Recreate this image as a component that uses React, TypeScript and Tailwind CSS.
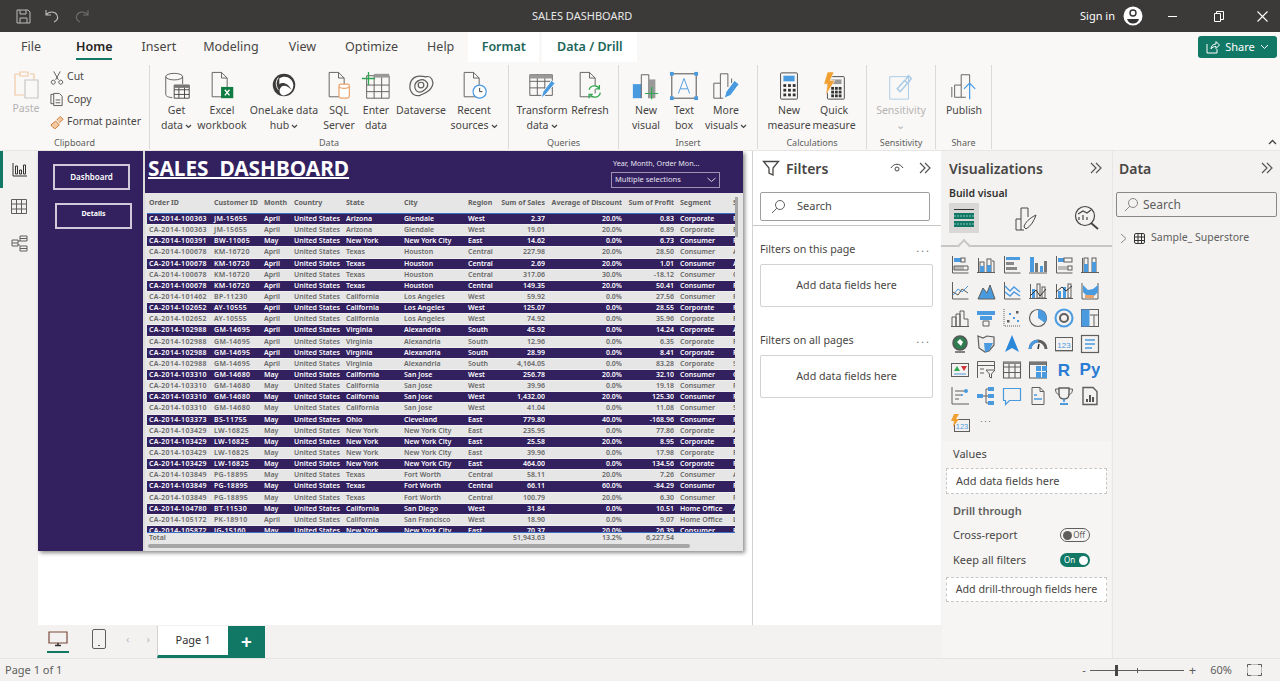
import React from 'react';

const G = '#605e5c';
const B = '#4a9ae0';
const O = '#e9a36b';

const Ico = ({ s = 30, vb = 32, children }: { s?: number; vb?: number; children: React.ReactNode }) => (
  <svg width={s} height={s} viewBox={`0 0 ${vb} ${vb}`} fill="none" stroke={G} strokeWidth={1} className="shrink-0">
    {children}
  </svg>
);

const Caret = () => (
  <svg width="7" height="5" viewBox="0 0 7 5" fill="none" stroke="#444" strokeWidth={1.2} className="inline ml-[2px]">
    <path d="M1 1l2.5 2.5L6 1" />
  </svg>
);

const DoubleChevron = () => (
  <svg width="14" height="12" viewBox="0 0 14 12" fill="none" stroke="#555" strokeWidth={1.2}>
    <path d="M2 1l5 5-5 5M7 1l5 5-5 5" />
  </svg>
);

const Doc = () => <path d="M5.5 1.5h10l6 6v20h-16zM15.5 1.5v6h6" />;

// ---- ribbon icons ----
const ribbonIcons: Record<string, React.ReactNode> = {
  getData: (
    <>
      <ellipse cx="13" cy="6" rx="9" ry="3.5" />
      <path d="M4 6v19c0 2 3 3 7 3.5M22 6v8" />
      <path d="M13 15h16v14H13zM13 20h16M13 25h16M18 15v14M24 15v14" stroke="#444" />
      <path d="M13 15h16v3H13z" fill="#777" stroke="none" />
    </>
  ),
  excel: (
    <>
      <Doc />
      <rect x="15" y="17" width="13" height="12" fill="#107c41" stroke="none" />
      <path d="M19 20l5 6M24 20l-5 6" stroke="#fff" strokeWidth={1.4} />
    </>
  ),
  onelake: (
    <>
      <circle cx="16" cy="15" r="12" fill="#3b3a39" stroke="none" />
      <path d="M11 8c6-4 14-1 15 7 0 7-6 11-11 11-4-1-5-6-2-9 3-3 8 0 11 3-3-6-9-9-13-6z" fill="#fff" stroke="none" />
      <path d="M10 7c-3 4-3 9 0 13" stroke="#fff" />
    </>
  ),
  sql: (
    <>
      <Doc />
      <rect x="16" y="14" width="11" height="15" rx="2" fill="#fff" stroke={O} strokeWidth={1.3} />
      <path d="M16 17c2 2 9 2 11 0" stroke={O} strokeWidth={1.3} />
    </>
  ),
  enter: (
    <>
      <path d="M6 5h24v24H6zM6 15h24M6 22h24M14 5v24M22 5v24" />
      <path d="M14 3h16v4H14z" fill="#999" stroke="none" />
      <path d="M8 1v14M1 8h14" stroke="#2fa84f" strokeWidth={1.4} />
    </>
  ),
  dataverse: (
    <>
      <path d="M8 25C2 20 3 9 11 6c5-2 8 1 11 0 5-1 8 5 6 10-3 7-9 8-13 10-3 1-5 0-7-1z" strokeWidth={1.3} />
      <path d="M11 21c-3-4-2-9 3-11 4-2 7 0 9 3 1 4-2 7-6 9-3 1-5 0-6-1z" strokeWidth={1.3} />
      <circle cx="16" cy="15" r="3" strokeWidth={1.3} />
    </>
  ),
  recent: (
    <>
      <Doc />
      <circle cx="22" cy="22" r="7" fill="#fff" stroke={B} strokeWidth={1.3} />
      <path d="M22 18v4h3" stroke="#333" />
    </>
  ),
  transform: (
    <>
      <path d="M3 4h24v22H3zM3 11h24M3 18h24M11 4v22M19 4v22" />
      <path d="M3 4h24v4H3z" fill="#999" stroke="none" />
      <path d="M15 29l2-7L26 10l4 3-10 12z" fill={B} stroke="#fff" />
    </>
  ),
  refresh: (
    <>
      <Doc />
      <path d="M15 20a6 6 0 0 1 11-1M27 23a6 6 0 0 1-11 2" stroke="#2fa84f" strokeWidth={1.4} fill="#fff" />
      <path d="M26 15v4h-4M15 29v-4h4" stroke="#2fa84f" strokeWidth={1.4} />
    </>
  ),
  newVisual: (
    <>
      <rect x="2" y="14" width="9" height="15" fill={B} stroke="none" />
      <path d="M11 29V4h8v25" />
      <rect x="19" y="9" width="7" height="20" fill="#999" stroke="none" />
      <path d="M22 17v13M15 24h14" stroke="#2fa84f" strokeWidth={1.3} />
    </>
  ),
  textBox: (
    <>
      <path d="M3 3h26v26H3z" stroke="#444" />
      <g fill={B} stroke="none">
        <rect x="1" y="1" width="4" height="4" />
        <rect x="27" y="1" width="4" height="4" />
        <rect x="1" y="27" width="4" height="4" />
        <rect x="27" y="27" width="4" height="4" />
      </g>
      <path d="M10 24l6-16 6 16M12 19h8" stroke={B} />
    </>
  ),
  moreVisuals: (
    <>
      <path d="M3 29V13h7M10 29V3h8v14M3 29h10M22 8v5" />
      <path d="M14 29l2-7 9-12 5 4-9 12z" fill={B} stroke="#fff" />
    </>
  ),
  newMeasure: (
    <>
      <rect x="7" y="2" width="18" height="28" rx="1" stroke="#444" />
      <rect x="10" y="5" width="12" height="6" fill={B} stroke="none" />
      <g fill="#333" stroke="none">
        {[14, 19, 24].map((y) => [10, 15, 20].map((x) => <rect key={`${x}-${y}`} x={x} y={y} width="3" height="3" />))}
      </g>
    </>
  ),
  quick: (
    <>
      <rect x="9" y="6" width="18" height="24" rx="1" stroke="#444" />
      <rect x="13" y="9" width="11" height="5" fill="#999" stroke="none" />
      <g fill="#333" stroke="none">
        {[17, 21, 25].map((y) => [13, 17, 21].map((x) => <rect key={`${x}-${y}`} x={x} y={y} width="3" height="3" />))}
      </g>
      <path d="M9 1h7l-4 9h5L7 26l2-12H5z" fill="#f0a030" stroke="#fff" strokeWidth={0.6} />
    </>
  ),
  sensitivity: (
    <g stroke="#a9cbe6">
      <path d="M4 6h20v24H4z" />
      <path d="M12 19l8-9 3 3-8 9zM21 9l3-4 3 3-3 4" strokeWidth={1.6} />
    </g>
  ),
  publish: (
    <>
      <path d="M6 28V15h7M13 28V4h9v12M6 28h12M3 28V17" />
      <path d="M22 30V13M16 19l6-6 6 6" stroke={B} strokeWidth={1.3} />
    </>
  ),
};

type BtnProps = { w: number; icon: string; lines: string[]; caret?: boolean; off?: boolean };
const RibbonBtn = ({ w, icon, lines, caret, off }: BtnProps) => (
  <div style={{ width: w }} className={`flex flex-col items-center shrink-0 ${off ? 'text-[#b5b3b1]' : 'text-[#484644]'}`}>
    <div className="h-[32px] flex items-center justify-center">
      <Ico>{ribbonIcons[icon]}</Ico>
    </div>
    <div className="mt-[1px] text-center text-[10.5px] leading-[15px] whitespace-nowrap">
      {lines.map((l, i) => (
        <div key={l}>
          {l}
          {caret && i === lines.length - 1 && <Caret />}
        </div>
      ))}
    </div>
  </div>
);

const Group = ({ w, label, pl = 0, children }: { w: number; label: string; pl?: number; children: React.ReactNode }) => (
  <div style={{ width: w }} className="shrink-0 flex flex-col border-r border-[#dcdad8] mt-[3px] h-[84px]">
    <div style={{ paddingLeft: pl }} className="flex h-[73px] pt-[5px]">
      {children}
    </div>
    <div className="text-center text-[9px] leading-[12px] text-[#605e5c]">{label}</div>
  </div>
);

const tabs = [
  ['File', 'ml-[21px]'],
  ['Home', 'ml-[35px]'],
  ['Insert', 'ml-[29px]'],
  ['Modeling', 'ml-[27px]'],
  ['View', 'ml-[30px]'],
  ['Optimize', 'ml-[29px]'],
  ['Help', 'ml-[29px]'],
];

// ---- table ----
const cols = 'grid grid-cols-[65px_50px_30px_52px_58px_64px_29px_50px_77px_52px_57px_4px] items-center';

const base = [
  ['100363', 'JM-15655', 'April', 'Arizona', 'Glendale', 'West'],
  ['100391', 'BW-11065', 'May', 'New York', 'New York City', 'East'],
  ['100678', 'KM-16720', 'April', 'Texas', 'Houston', 'Central'],
  ['101462', 'BP-11230', 'April', 'California', 'Los Angeles', 'West'],
  ['102652', 'AY-10555', 'April', 'California', 'Los Angeles', 'West'],
  ['102988', 'GM-14695', 'April', 'Virginia', 'Alexandria', 'South'],
  ['103310', 'GM-14680', 'May', 'California', 'San Jose', 'West'],
  ['103373', 'BS-11755', 'May', 'Ohio', 'Cleveland', 'East'],
  ['103429', 'LW-16825', 'May', 'New York', 'New York City', 'East'],
  ['103849', 'PG-18895', 'May', 'Texas', 'Fort Worth', 'Central'],
  ['104780', 'BT-11530', 'May', 'California', 'San Diego', 'West'],
  ['105172', 'PK-18910', 'April', 'California', 'San Francisco', 'West'],
  ['105872', 'JG-15160', 'May', 'New York', 'New York City', 'East'],
];

const rows: [number, string, string, string, string, string][] = [
  [0, '2.37', '20.0%', '0.83', 'Corporate', 'F'],
  [0, '19.01', '20.0%', '6.89', 'Corporate', 'F'],
  [1, '14.62', '0.0%', '6.73', 'Consumer', 'F'],
  [2, '227.98', '20.0%', '28.50', 'Consumer', 'A'],
  [2, '2.69', '20.0%', '1.01', 'Consumer', 'A'],
  [2, '317.06', '30.0%', '-18.12', 'Consumer', 'O'],
  [2, '149.35', '20.0%', '50.41', 'Consumer', 'F'],
  [3, '59.92', '0.0%', '27.56', 'Consumer', 'F'],
  [4, '125.07', '0.0%', '28.55', 'Corporate', 'F'],
  [4, '74.92', '0.0%', '35.96', 'Corporate', 'F'],
  [5, '45.92', '0.0%', '14.24', 'Corporate', 'A'],
  [5, '12.96', '0.0%', '6.35', 'Corporate', 'F'],
  [5, '28.99', '0.0%', '8.41', 'Corporate', 'F'],
  [5, '4,164.05', '0.0%', '83.28', 'Corporate', 'S'],
  [6, '256.78', '20.0%', '32.10', 'Consumer', 'O'],
  [6, '39.96', '0.0%', '19.18', 'Consumer', 'F'],
  [6, '1,432.00', '20.0%', '125.30', 'Consumer', 'F'],
  [6, '41.04', '0.0%', '11.08', 'Consumer', 'S'],
  [7, '779.80', '40.0%', '-168.96', 'Consumer', 'F'],
  [8, '235.95', '0.0%', '77.86', 'Corporate', 'A'],
  [8, '25.58', '20.0%', '8.95', 'Corporate', 'E'],
  [8, '39.96', '0.0%', '17.98', 'Corporate', 'F'],
  [8, '464.00', '0.0%', '134.56', 'Corporate', 'F'],
  [9, '58.11', '20.0%', '7.26', 'Consumer', 'A'],
  [9, '66.11', '60.0%', '-84.29', 'Consumer', 'F'],
  [9, '100.79', '20.0%', '6.30', 'Consumer', 'F'],
  [10, '31.84', '0.0%', '10.51', 'Home Office', 'A'],
  [11, '18.90', '0.0%', '9.07', 'Home Office', 'L'],
  [12, '70.37', '20.0%', '26.39', 'Consumer', 'F'],
];

const Cell = ({ r, t, children }: { r?: boolean; t?: boolean; children?: React.ReactNode }) => (
  <div className={`overflow-hidden whitespace-nowrap ${r ? 'text-right' : 'pl-[2px]'} ${t ? 'tracking-[0.3px]' : ''}`}>{children}</div>
);

const Table = () => (
  <div className="flex-1 min-h-0 bg-[#e6e6e6] flex relative">
    <div className="w-[588px] flex flex-col ml-[2px]">
      <div className={`${cols} h-[20px] text-[7px] font-bold text-[#5f5f5f]`}>
        {['Order ID', 'Customer ID', 'Month', 'Country', 'State', 'City', 'Region'].map((h) => (
          <Cell key={h}>{h}</Cell>
        ))}
        <Cell r>Sum of Sales</Cell>
        <Cell r>Average of Discount</Cell>
        <Cell r>Sum of Profit</Cell>
        <div className="pl-[6px]">Segment</div>
        <Cell>S</Cell>
      </div>
      <div className="h-[319px] overflow-hidden border-t border-[#3b6fc4]">
        {rows.map((r, i) => {
          const b = base[r[0]];
          const dark = i % 2 === 0;
          return (
            <div
              key={i}
              className={`${cols} h-[11.15px] text-[7px] font-semibold border-b border-[#f0f0f0] ${
                dark ? 'bg-[#33215f] text-white font-bold' : 'bg-[#e6e6e6] text-[#666]'
              }`}
            >
              <Cell t>CA-2014-{b[0]}</Cell>
              <Cell t>{b[1]}</Cell>
              <Cell>{b[2]}</Cell>
              <Cell>United States</Cell>
              <Cell>{b[3]}</Cell>
              <Cell>{b[4]}</Cell>
              <Cell>{b[5]}</Cell>
              <Cell r>{r[1]}</Cell>
              <Cell r>{r[2]}</Cell>
              <Cell r>{r[3]}</Cell>
              <div className="pl-[6px] whitespace-nowrap">{r[4]}</div>
              <Cell>{r[5]}</Cell>
            </div>
          );
        })}
      </div>
      <div className={`${cols} h-[12px] text-[7px] font-semibold text-[#666] border-t border-[#3b6fc4]`}>
        <Cell>Total</Cell>
        <Cell />
        <Cell />
        <Cell />
        <Cell />
        <Cell />
        <Cell />
        <Cell r>51,943.63</Cell>
        <Cell r>13.2%</Cell>
        <Cell r>6,227.54</Cell>
      </div>
      <div className="h-[4px] w-[542px] bg-[#a6a6a6] rounded-sm ml-[1px]" />
    </div>
    <div className="absolute left-[590px] top-[4px] w-[3px] h-[40px] bg-[#a6a6a6]" />
  </div>
);

// ---- visualization gallery ----
const bars = (rects: [number, number, number, number, string][]) =>
  rects.map(([x, y, w, h, c]) => <rect key={`${x}-${y}-${c}`} x={x} y={y} width={w} height={h} fill={c === 'b' ? B : c === 'g' ? '#bbb' : 'none'} stroke={c === 'n' ? G : 'none'} />);
const axisL = <path d="M2.5 1v17h16" />;
const axisB = <path d="M1 17.5h18M2.5 17V3" />;

const viz: React.ReactNode[] = [
  <>{axisL}{bars([[4, 3, 7, 4, 'b'], [11, 3, 4, 4, 'n'], [4, 11, 10, 4, 'g']])}<path d="M4 11h14v4H4z" /></>,
  <>{axisB}{bars([[4, 7, 4, 10, 'n'], [4, 11, 4, 6, 'b'], [11, 4, 4, 13, 'n'], [11, 10, 4, 7, 'b']])}<path d="M16 6h2v11" /></>,
  <>{axisL}<rect x="4" y="2" width="14" height="3" fill={B} stroke="none" /><rect x="4" y="7" width="8" height="3" fill="#888" stroke="none" /><rect x="4" y="12" width="11" height="3" fill="#888" stroke="none" /></>,
  <><path d="M1 18h18" /><rect x="2" y="2" width="4" height="15" fill={B} stroke="none" /><rect x="7" y="8" width="3" height="9" fill="#777" stroke="none" /><rect x="12" y="11" width="3" height="6" fill={B} stroke="none" /><rect x="16" y="6" width="3" height="11" fill="#777" stroke="none" /></>,
  <>{axisL}{bars([[4, 3, 6, 4, 'b'], [10, 3, 8, 4, 'n'], [4, 11, 10, 4, 'g'], [14, 11, 4, 4, 'n']])}</>,
  <>{axisB}{bars([[4, 3, 4, 14, 'n'], [4, 9, 4, 8, 'b'], [12, 3, 4, 14, 'n'], [12, 7, 4, 10, 'b']])}</>,

  <>{axisL}<path d="M3 14l5-6 4 3 6-6" stroke={B} /><path d="M3 11l5 3 4-6 6 4" /></>,
  <><path d="M2 18L7 7l4 5 3-8 5 14z" fill={B} stroke={G} /></>,
  <>{axisL}<path d="M3 5l5 5 4-4 6 5" stroke={B} strokeWidth={1.4} /><path d="M3 11l5 4 4-4 6 4" stroke={B} strokeWidth={1.4} /></>,
  <>{axisB}{bars([[4, 8, 3, 9, 'b'], [9, 3, 3, 14, 'n'], [14, 6, 3, 11, 'n']])}<path d="M2 15l6-6 4 6 6-7" stroke="#333" /></>,
  <>{axisB}{bars([[4, 10, 3, 7, 'b'], [9, 6, 3, 11, 'b'], [14, 3, 3, 14, 'n']])}<path d="M2 11l6-5 4 4 6-5" stroke="#333" /></>,
  <><path d="M2 2v16h16V2" /><path d="M3 4l5 5 5-1 5-4v7l-5 5H8L3 11z" fill={B} stroke="none" /><path d="M5 14h9v3H5z" fill={O} stroke="none" /></>,

  <><path d="M1 18.5h18M2 18V9h4v9M6 18V6h4v12M10 18V3h4v8h4v7" /></>,
  <><path d="M1 3h18v4H1z" fill={B} stroke="none" /><path d="M4 8h12v4H4z" fill={B} stroke="none" /><path d="M7 13h6v5H7z" stroke={G} /></>,
  <><path d="M2 1v17h17" strokeDasharray="1 1" /><g fill={G} stroke="none"><rect x="5" y="12" width="2.5" height="2.5" /><rect x="14" y="3" width="2.5" height="2.5" /></g><g fill={B} stroke="none"><rect x="7" y="5" width="2" height="2" /><rect x="11" y="9" width="2" height="2" /><rect x="15" y="12" width="2" height="2" /></g></>,
  <><circle cx="10" cy="10" r="8.5" strokeWidth={1.2} /><path d="M10 10V1.5A8.5 8.5 0 0 1 17 15z" fill={B} stroke="none" /></>,
  <><circle cx="10" cy="10" r="8.5" stroke={B} strokeWidth={2} /><circle cx="10" cy="10" r="4" stroke={G} strokeWidth={2} /></>,
  <><rect x="1.5" y="1.5" width="17" height="17" /><rect x="1.5" y="1.5" width="8" height="17" fill={B} stroke="none" /><path d="M10 7h9M14 7v12" /></>,

  <><circle cx="10" cy="9" r="7" fill="#2f7d4f" stroke="#555" strokeWidth={1.5} /><path d="M7 8l3-3 3 3-2 4z" fill="#fff" stroke="none" /><path d="M5 18h10" strokeWidth={1.5} /></>,
  <><path d="M2 2l5 2 4-2 7 1v8l-5 6-4 1-6-4z" fill="#eee" stroke={G} strokeWidth={1.2} /><path d="M8 9h9l-4 8-4 1z" fill={B} stroke="none" /></>,
  <><path d="M10 1L3 18l7-4 7 4z" fill="#2b88d8" stroke="none" /></>,
  <><path d="M2 15a8 8 0 0 1 16 0" stroke={G} strokeWidth={3} /><path d="M2 15a8 8 0 0 1 8-8" stroke={B} strokeWidth={3} /><path d="M10 15l1-5" stroke="#333" strokeWidth={1.5} /></>,
  <><rect x="1.5" y="3.5" width="17" height="13" /><text x="10" y="13.5" fontSize="8" textAnchor="middle" fill={B} stroke="none" fontFamily="Liberation Sans">123</text><path d="M1 17.5h18" stroke="#bbb" /></>,
  <><rect x="1.5" y="1.5" width="17" height="17" strokeWidth={1.2} /><path d="M5 6h10M5 10h10M5 14h7" stroke={B} strokeWidth={1.4} /></>,

  <><rect x="1.5" y="3.5" width="17" height="13" /><path d="M4 11l3-5 3 5z" fill="#2fa84f" stroke="none" /><path d="M11 6h6l-3 5z" fill="#d13438" stroke="none" /><path d="M4 14h12" stroke={B} /></>,
  <><path d="M1.5 18V1.5h17v8" /><path d="M1.5 5.5h17M4 9h4M4 13h4" /><path d="M10 10h9l-3.5 4v4l-2-1v-3z" /></>,
  <><path d="M1.5 2h17v16h-17zM1.5 7h17M1.5 12.5h17M7 2v16M13 2v16" strokeWidth={1.1} /><path d="M1.5 2h17v2h-17z" fill="#888" stroke="none" /></>,
  <><rect x="1.5" y="2" width="17" height="16" stroke="#555" /><path d="M1.5 2h17v3h-17z" fill="#777" stroke="none" /><rect x="8" y="6" width="5" height="5" fill={B} stroke="none" /><rect x="14" y="6" width="5" height="5" fill={B} stroke="none" /><rect x="8" y="12" width="5" height="6" fill={B} stroke="none" /><rect x="14" y="12" width="5" height="6" fill={B} stroke="none" /></>,
  <text x="10" y="16" fontSize="17" fontWeight="bold" textAnchor="middle" fill="#2b7cd3" stroke="none" fontFamily="Liberation Sans">R</text>,
  <text x="10" y="15" fontSize="17" fontWeight="bold" textAnchor="middle" fill="#2b7cd3" stroke="none" fontFamily="Liberation Sans">Py</text>,

  <><path d="M2 1v17h17M5 5h10M5 9h7M5 13h4" /><circle cx="16" cy="5" r="2" fill={B} stroke="none" /><circle cx="12" cy="9" r="1" fill={B} stroke="none" /></>,
  <><rect x="1" y="8" width="6" height="4" fill={B} stroke="none" /><path d="M7 10h3M10 3v14M10 3h2M10 10h2M10 17h2" /><rect x="12" y="1" width="6" height="4" fill={B} stroke="none" /><rect x="12" y="8" width="6" height="4" fill={B} stroke="none" /><rect x="12" y="15" width="6" height="4" fill={B} stroke="none" /></>,
  <path d="M1.5 2.5h17v12h-11l-4 4v-4h-2z" stroke={B} strokeWidth={1.2} />,
  <><path d="M4 1.5h8l4 4v13H4zM12 1.5v4h4" /><path d="M6 9h3M6 13h8" stroke={B} strokeWidth={1.3} /></>,
  <><path d="M5 2h10v6c0 3-2 5-5 5s-5-2-5-5z" strokeWidth={1.4} /><path d="M5 3H1.5c0 3 1 5 4 6M15 3h3.5c0 3-1 5-4 6" /><path d="M10 13v3M6 18h8" stroke={B} strokeWidth={1.8} /></>,
  <><path d="M3 1.5h10l4 4v13H3z" strokeWidth={1.4} /><path d="M7 16v-3M10 16V9M13 16v-5" strokeWidth={1.8} stroke="#444" /></>,

  <><rect x="4.5" y="6.5" width="15" height="12" /><text x="12" y="16" fontSize="7.5" textAnchor="middle" fill={B} stroke="none" fontFamily="Liberation Sans">123</text><path d="M4 1h5L6 6h3l-6 8 1-6H1z" fill="#f0a030" stroke="none" /></>,
  <text x="10" y="11" fontSize="9" textAnchor="middle" fill="#605e5c" stroke="none" letterSpacing="1" fontFamily="Liberation Sans">···</text>,
];

const Toggle = ({ on }: { on?: boolean }) =>
  on ? (
    <div className="w-[30px] h-[14px] rounded-full bg-[#117865] flex items-center justify-between pl-[4px] pr-[2px] text-[8px] text-white leading-none">
      On
      <span className="w-[9px] h-[9px] rounded-full bg-white" />
    </div>
  ) : (
    <div className="w-[30px] h-[14px] rounded-full border border-[#605e5c] flex items-center justify-between pl-[2px] pr-[4px] text-[8px] text-[#605e5c] leading-none">
      <span className="w-[9px] h-[9px] rounded-full bg-[#605e5c]" />
      Off
    </div>
  );

const SearchIcon = ({ c = '#605e5c' }: { c?: string }) => (
  <svg width="15" height="15" viewBox="0 0 15 15" fill="none" stroke={c} strokeWidth={1}>
    <circle cx="9" cy="6" r="4.5" />
    <path d="M5.8 9.2L1 14" />
  </svg>
);

const FilterBox = () => (
  <div className="ml-[7px] mr-[8px] h-[43px] shrink-0 border border-[#d4d2d0] rounded-[2px] bg-white flex items-center justify-center text-[10.7px] text-[#484644]">
    Add data fields here
  </div>
);

const Dots = () => <span className="tracking-[2px] text-[#777] text-[11px] leading-none pb-[4px]">...</span>;

export default function App() {
  return (
    <div className="w-[1280px] h-[681px] flex flex-col overflow-hidden bg-white font-['Noto_Sans',sans-serif] text-[#323130]">
      {/* Title bar */}
      <div className="h-[32px] shrink-0 bg-[#3b3a39] flex items-center text-white">
        <div className="w-[532px] flex items-center gap-[14px] pl-[16px]">
          <svg width="15" height="15" viewBox="0 0 15 15" fill="none" stroke="#bdbbb9" strokeWidth={1}>
            <path d="M1 1h11l2 2v11H1zM4 1v4h6V1M4 14V9h7v5" />
          </svg>
          <svg width="15" height="14" viewBox="0 0 15 14" fill="none" stroke="#bdbbb9" strokeWidth={1.1}>
            <path d="M1 1v5h5M1 6c3-4 9-4 11 0s-1 6-3 7" />
          </svg>
          <svg width="15" height="14" viewBox="0 0 15 14" fill="none" stroke="#6f6e6d" strokeWidth={1.1}>
            <path d="M14 1v5H9M14 6c-3-4-9-4-11 0s1 6 3 7" />
          </svg>
        </div>
        <div className="w-[100px] text-[11px] text-center whitespace-nowrap text-[#e8e8e8]">SALES DASHBOARD</div>
        <div className="flex-1 flex items-center justify-end">
          <span className="text-[11px] mr-[8px]">Sign in</span>
          <svg width="20" height="20" viewBox="0 0 20 20" className="mr-[25px]">
            <circle cx="10" cy="10" r="9.5" fill="#fff" />
            <circle cx="10" cy="7" r="3" fill="none" stroke="#333" strokeWidth={1.4} />
            <path d="M4 13h12c-1 3-3 4.5-6 4.500S5 16 4 13z" fill="#333" />
          </svg>
          <div className="w-[9px] h-[1px] bg-white mr-[37px]" />
          <svg width="10" height="11" viewBox="0 0 10 11" fill="none" stroke="#fff" strokeWidth={1} className="mr-[33px]">
            <path d="M.5 2.5h6v8h-6zM2.5 2.5v-2h7v8h-3" />
          </svg>
          <svg width="11" height="11" viewBox="0 0 11 11" stroke="#fff" strokeWidth={1.1} className="mr-[12px]">
            <path d="M.5.5l10 10M10.5.5L.5 10.5" />
          </svg>
        </div>
      </div>

      {/* Tabs */}
      <div className="h-[30px] shrink-0 bg-[#f9f8f7] flex items-stretch text-[12.5px] text-[#484644] relative">
        {tabs.map(([t, ml]) => (
          <div key={t} className={`${ml} flex items-center relative ${t === 'Home' ? 'font-semibold text-[#252423]' : ''}`}>
            {t}
            {t === 'Home' && <div className="absolute left-0 right-0 bottom-[2px] h-[2px] bg-[#117865]" />}
          </div>
        ))}
        <div className="ml-[14px] w-[71px] bg-white flex items-center justify-center font-semibold text-[#1c6658]">Format</div>
        <div className="ml-[3px] w-[95px] bg-white flex items-center justify-center font-semibold text-[#1c6658]">Data / Drill</div>
        <div className="ml-auto mr-[3px] mt-[4px] w-[79px] h-[22px] rounded-[3px] bg-[#117865] flex items-center justify-center gap-[5px] text-white text-[11px]">
          <svg width="14" height="14" viewBox="0 0 14 14" fill="none" stroke="#fff" strokeWidth={1}>
            <path d="M1 4v9h10V9M5 9c0-3 2-5 5-5V1.5L13.5 5 10 8.500V6.500C8 6.500 6 7 5 9z" />
          </svg>
          Share
          <svg width="9" height="6" viewBox="0 0 9 6" fill="none" stroke="#fff" strokeWidth={1}>
            <path d="M1 1l3.5 3.500L8 1" />
          </svg>
        </div>
      </div>

      {/* Ribbon */}
      <div className="h-[89px] shrink-0 bg-[#f9f8f7] flex relative border-b border-[#e8e6e4]">
        <Group w={150} label="Clipboard">
          <div className="w-[50px] flex flex-col items-center text-[#b5b3b1] text-[10.5px] leading-[12px] pl-[2px]">
            <svg width="28" height="30" viewBox="0 0 28 30" fill="none" stroke="#f0c9a4" strokeWidth={1.2} className="-mt-[1px]">
              <path d="M3 5h5M18 5h4v6M3 5v21h9M8 3h8v4H8z" />
              <path d="M13 11h13v18H13z" stroke="#c8c6c4" />
            </svg>
            <div className="mt-[3px]">Paste</div>
          </div>
          <div className="flex flex-col text-[10.5px] text-[#484644] -mt-[4px]">
            {[
              ['Cut', <path key="c" d="M4 1l5 9M11 1L6 10M5 14a2 2 0 1 1-3-3 2 2 0 0 1 3 3zM13 14a2 2 0 1 1-3-3 2 2 0 0 1 3 3z" stroke="#555" />],
              ['Copy', <path key="p" d="M4 2H1v10h3M4 1h6l3 3v10H4zM6 8h5M6 11h5" stroke="#555" />],
              ['Format painter', <path key="f" d="M1 10l5-4 4 4-4 4c-2 0-4-2-5-4z M7 5l4-4 3 3-4 4" stroke="#c87533" fill="#f2c9a0" />],
            ].map(([l, p]) => (
              <div key={l as string} className="h-[22.5px] flex items-center gap-[3px]">
                <svg width="14" height="15" viewBox="0 0 15 15" fill="none">
                  {p}
                </svg>
                {l}
              </div>
            ))}
          </div>
        </Group>
        <Group w={359} label="Data" pl={6}>
          <RibbonBtn w={41} icon="getData" lines={['Get', 'data']} caret />
          <RibbonBtn w={50} icon="excel" lines={['Excel', 'workbook']} />
          <RibbonBtn w={74} icon="onelake" lines={['OneLake data', 'hub']} caret />
          <RibbonBtn w={36} icon="sql" lines={['SQL', 'Server']} />
          <RibbonBtn w={38} icon="enter" lines={['Enter', 'data']} />
          <RibbonBtn w={52} icon="dataverse" lines={['Dataverse']} />
          <RibbonBtn w={54} icon="recent" lines={['Recent', 'sources']} caret />
        </Group>
        <Group w={110} label="Queries" pl={7}>
          <RibbonBtn w={52} icon="transform" lines={['Transform', 'data']} caret />
          <RibbonBtn w={44} icon="refresh" lines={['Refresh']} />
        </Group>
        <Group w={139} label="Insert" pl={8}>
          <RibbonBtn w={38} icon="newVisual" lines={['New', 'visual']} />
          <RibbonBtn w={38} icon="textBox" lines={['Text', 'box']} />
          <RibbonBtn w={46} icon="moreVisuals" lines={['More', 'visuals']} caret />
        </Group>
        <Group w={109} label="Calculations" pl={7}>
          <RibbonBtn w={48} icon="newMeasure" lines={['New', 'measure']} />
          <RibbonBtn w={42} icon="quick" lines={['Quick', 'measure']} />
        </Group>
        <Group w={69} label="Sensitivity">
          <RibbonBtn w={68} icon="sensitivity" lines={['Sensitivity', '⌄']} off />
        </Group>
        <Group w={56} label="Share">
          <RibbonBtn w={56} icon="publish" lines={['Publish']} />
        </Group>
        <svg width="9" height="6" viewBox="0 0 9 6" fill="none" stroke="#444" strokeWidth={1.3} className="absolute right-[3px] top-[77px]">
          <path d="M1 5l3.500-3.500L8 5" />
        </svg>
      </div>

      {/* Middle */}
      <div className="flex-1 min-h-0 flex">
        <div className="w-[941px] flex flex-col">
          <div className="flex-1 min-h-0 flex">
            {/* Left rail */}
            <div className="w-[38px] shrink-0 bg-[#f3f2f1] flex flex-col">
              <div className="h-[37px] border-l-[3px] border-[#117865] flex items-center justify-center pr-[3px]">
                <svg width="15" height="14" viewBox="0 0 15 14" fill="none" stroke="#333" strokeWidth={1}>
                  <path d="M1 0v13h14M3.500 11V3h2v8zM7.500 11V7h2v4zM11.500 11V2h2v9z" />
                </svg>
              </div>
              <div className="h-[37px] flex items-center justify-center">
                <svg width="16" height="15" viewBox="0 0 16 15" fill="none" stroke="#605e5c" strokeWidth={1}>
                  <path d="M.5.5h15v14H.5zM.5 5h15M.5 10h15M5.500.5v14M10.500.5v14" />
                </svg>
              </div>
              <div className="h-[37px] flex items-center justify-center">
                <svg width="17" height="17" viewBox="0 0 17 17" fill="none" stroke="#605e5c" strokeWidth={1}>
                  <path d="M1 5h6v6H1zM1 8h6M9 1h7v5H9zM9 3.500h7M9 11h7v5H9zM9 13.500h7M7 6h2M7 10h2" />
                </svg>
              </div>
            </div>

            {/* Canvas */}
            <div className="flex-1 min-w-0 bg-white flex">
              <div className="w-[705px] h-[400px] bg-[#33215f] flex shadow-[2px_2px_4px_rgba(0,0,0,0.45)]">
                <div className="w-[107px] shrink-0 border-r-2 border-[#dcdcdc] flex flex-col">
                  <div className="ml-[15px] mt-[13px] w-[77px] h-[26px] border-2 border-[#cfc9da] flex items-center justify-center text-white text-[8px] font-semibold">
                    Dashboard
                  </div>
                  <div className="ml-[17px] mt-[13px] w-[77px] h-[26px] border-2 border-[#cfc9da] flex items-center justify-center text-white text-[7px] font-bold pb-[3px]">
                    Details
                  </div>
                </div>
                <div className="flex-1 min-w-0 flex flex-col">
                  <div className="h-[42px] shrink-0 flex justify-between pl-[3px]">
                    <div className="text-[20.8px] leading-[34px] font-bold text-white underline decoration-[2px] underline-offset-[1px] whitespace-pre">
                      SALES  DASHBOARD
                    </div>
                    <div className="w-[132px] flex flex-col pt-[7px]">
                      <div className="pl-[2px] text-[7.2px] leading-[11px] text-[#e6e1ee] whitespace-nowrap">Year, Month, Order Mon...</div>
                      <div className="w-[109px] h-[16px] mt-[3px] border border-[#9d93b5] flex items-center justify-between px-[3px] text-[7.5px] text-[#e6e1ee]">
                        Multiple selections
                        <svg width="9" height="6" viewBox="0 0 9 6" fill="none" stroke="#d5d0de" strokeWidth={1}>
                          <path d="M.5 1l4 3.500 4-3.500" />
                        </svg>
                      </div>
                    </div>
                  </div>
                  <Table />
                </div>
              </div>
            </div>

            {/* Filters */}
            <div className="w-[189px] shrink-0 bg-white border-l border-[#d4d2d0] flex flex-col">
              <div className="h-[34px] flex items-center pl-[9px] pr-[9px]">
                <svg width="18" height="18" viewBox="0 0 18 18" fill="none" stroke="#484644" strokeWidth={1.3}>
                  <path d="M1.500 2.500h15L11 9v7l-4-2V9z" />
                </svg>
                <span className="ml-[6px] text-[14px] font-semibold text-[#484644]">Filters</span>
                <svg width="14" height="10" viewBox="0 0 14 10" fill="none" stroke="#484644" strokeWidth={1} className="ml-auto">
                  <path d="M1 5c3-5 9-5 12 0" />
                  <circle cx="7" cy="6" r="2" />
                </svg>
                <span className="ml-[14px]">
                  <DoubleChevron />
                </span>
              </div>
              <div className="ml-[7px] mr-[11px] h-[29px] mt-[7px] border border-[#a19f9d] rounded-[2px] flex items-center pl-[10px] text-[11px] text-[#484644]">
                <SearchIcon />
                <span className="ml-[11px]">Search</span>
              </div>
              <div className="mt-[4px] border-t border-[#c8c6c4] h-[39px] flex items-end justify-between pl-[7px] pr-[10px] text-[10.7px] text-[#484644] pb-[7px]">
                Filters on this page <Dots />
              </div>
              <FilterBox />
              <div className="h-[48px] shrink-0 flex items-end justify-between pl-[7px] pr-[10px] text-[10.7px] text-[#484644] pb-[7px]">
                Filters on all pages <Dots />
              </div>
              <FilterBox />
            </div>
          </div>

          {/* Page tabs */}
          <div className="h-[33px] shrink-0 bg-[#f3f2f1] flex items-stretch pt-[1px]">
            <div className="w-[157px] flex items-center relative">
              <svg width="20" height="16" viewBox="0 0 20 16" fill="none" stroke="#333" strokeWidth={1.2} className="ml-[48px] mb-[6px]">
                <path d="M1 1h18v11H1z" stroke="#7a4a3a" />
                <path d="M7 14.500h6M10 12v2" strokeWidth={1.6} />
              </svg>
              <svg width="14" height="20" viewBox="0 0 14 20" fill="none" stroke="#605e5c" strokeWidth={1} className="ml-[24px] mb-[6px]">
                <rect x=".5" y=".5" width="13" height="19" rx="1.500" />
                <path d="M6 16.500h2" />
              </svg>
              <span className="ml-[20px] mb-[6px] text-[#bbb] text-[11px]">‹</span>
              <span className="ml-[17px] mb-[6px] text-[#bbb] text-[11px]">›</span>
              <div className="absolute left-[47px] w-[22px] h-[2px] bottom-[5px] bg-[#117865]" />
            </div>
            <div className="w-[71px] bg-white border-b-[3px] border-[#117865] flex items-center justify-center text-[11px] text-[#323130] border-l border-l-[#d4d2d0]">
              Page 1
            </div>
            <div className="w-[37px] bg-[#117865] flex items-center justify-center text-white text-[19px] font-bold leading-none">+</div>
          </div>
        </div>

        {/* Visualizations */}
        <div className="w-[172px] shrink-0 bg-[#f3f2f1] border-r border-[#e8e6e4] flex flex-col">
          <div className="h-[34px] flex items-center justify-between pl-[8px] pr-[9px]">
            <span className="text-[14px] font-semibold text-[#484644]">Visualizations</span>
            <DoubleChevron />
          </div>
          <div className="pl-[8px] text-[10.5px] font-semibold leading-[14px] mt-[1px]">Build visual</div>
          <div className="flex items-center h-[30px] mt-[3px] pl-[8px]">
            <div className="w-[30px] h-[30px] bg-[#d9d8d6] flex items-center justify-center">
              <svg width="22" height="22" viewBox="0 0 22 22" stroke="none">
                <path d="M1 2h20v1H1z" fill="#333" />
                <rect x="1" y="6" width="20" height="6" fill="#117865" />
                <rect x="1" y="14" width="20" height="6" fill="#117865" />
                <path d="M1 9h20M1 17h20" stroke="#8fc4b8" strokeWidth={1} strokeDasharray="2 1" />
              </svg>
            </div>
            <svg width="24" height="26" viewBox="0 0 24 26" fill="none" stroke="#484644" strokeWidth={1} className="ml-[35px]">
              <path d="M2 25v-11h5M7 25V3h7v9M2 25h8" />
              <path d="M10 22c1-5 6-9 12-12-2 6-5 11-10 14z" stroke="#444" />
            </svg>
            <svg width="26" height="26" viewBox="0 0 26 26" fill="none" stroke="#484644" strokeWidth={1.2} className="ml-[36px]">
              <circle cx="11" cy="11" r="9.500" />
              <path d="M17 18l7 6" strokeWidth={2} />
              <path d="M5 15v-3M9 15v-5M13 15v-3M4 9l5-3 4 2 4-3" />
            </svg>
          </div>
          <div className="mt-[12px] relative border-t-2 border-[#c8c6c4]">
            <div className="absolute left-[18px] -top-[6px] w-[10px] h-[10px] rotate-45 bg-[#f3f2f1] border-l-2 border-t-2 border-[#c8c6c4]" />
          </div>
          <div className="pl-[9px] pt-[8px] grid grid-cols-[repeat(6,26px)] auto-rows-[26.3px] h-[194px] shrink-0 items-start">
            {viz.map((v, i) => (
              <Ico key={i} s={20} vb={20}>
                {v}
              </Ico>
            ))}
          </div>
          <div className="bg-[#f6f5f4] mx-[1px] flex-1 flex flex-col text-[11px] text-[#484644]">
            <div className="px-[11px] h-[27px] flex items-center">Values</div>
            <div className="mx-[4px] h-[26px] border border-dashed border-[#c8c6c4] bg-white flex items-center pl-[9px]">Add data fields here</div>
            <div className="px-[11px] mt-[9px] leading-[16px] font-semibold text-[#605e5c]">Drill through</div>
            <div className="pl-[11px] mt-[8px] h-[16px] flex items-center justify-between pr-[21px]">
              Cross-report <Toggle />
            </div>
            <div className="pl-[11px] mt-[9px] h-[16px] flex items-center justify-between pr-[21px]">
              Keep all filters <Toggle on />
            </div>
            <div className="mx-[4px] mt-[9px] h-[25px] border border-dashed border-[#c8c6c4] bg-white flex items-center justify-center whitespace-nowrap text-[10.7px]">
              Add drill-through fields here
            </div>
          </div>
        </div>

        {/* Data */}
        <div className="flex-1 min-w-0 bg-[#f3f2f1] flex flex-col">
          <div className="h-[34px] flex items-center justify-between pl-[6px] pr-[6px]">
            <span className="text-[14px] font-semibold text-[#484644]">Data</span>
            <DoubleChevron />
          </div>
          <div className="mx-[3px] mt-[7px] h-[25px] border border-[#8a8886] rounded-[2px] flex items-center pl-[7px] text-[12px] text-[#605e5c]">
            <SearchIcon c="#8a8886" />
            <span className="ml-[4px]">Search</span>
          </div>
          <div className="mt-[12px] pl-[7px] flex items-center h-[18px] text-[10.5px] text-[#605e5c]">
            <svg width="7" height="11" viewBox="0 0 7 11" fill="none" stroke="#8a8886" strokeWidth={1}>
              <path d="M1 1l5 4.500L1 10" />
            </svg>
            <svg width="11" height="11" viewBox="0 0 11 11" fill="none" stroke="#333" strokeWidth={1} className="ml-[7px]">
              <rect x=".5" y=".5" width="10" height="10" rx="1.500" />
              <path d="M.5 4h10M.5 7.500h10M4 .5v10M7.500 .5v10" />
            </svg>
            <span className="ml-[6px]">Sample_ Superstore</span>
          </div>
        </div>
      </div>

      {/* Status bar */}
      <div className="h-[23px] shrink-0 bg-[#f3f2f1] border-t border-[#e6e4e2] flex items-center text-[#605e5c]">
        <span className="pl-[5px] text-[11px]">Page 1 of 1</span>
        <div className="ml-auto flex items-center text-[11px]">
          <span>-</span>
          <div className="ml-[4px] w-[94px] h-[1px] bg-[#605e5c] relative">
            <div className="absolute left-[25px] -top-[5px] w-[3px] h-[11px] bg-[#484644]" />
            <div className="absolute left-[47px] -top-[2px] w-[1px] h-[5px] bg-[#605e5c]" />
          </div>
          <span className="ml-[5px] text-[13px] leading-none">+</span>
          <span className="ml-[14px]">60%</span>
          <svg width="15" height="12" viewBox="0 0 15 12" fill="none" stroke="#605e5c" strokeWidth={1} className="ml-[15px] mr-[18px]">
            <path d="M.5 3V.5H4M11 .5h3.500V3M14.500 9v2.500H11M4 11.500H.5V9" />
            <path d="M4 .5h7M4 11.500h7M.5 3v6M14.500 3v6" stroke="#bbb" />
          </svg>
        </div>
      </div>
    </div>
  );
}
